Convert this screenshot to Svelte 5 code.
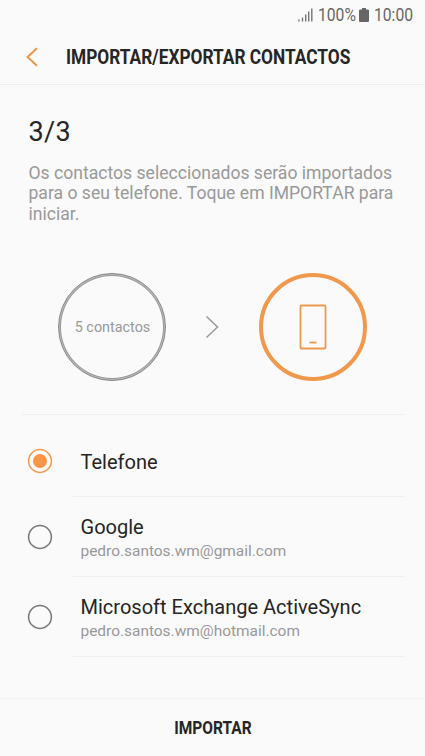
<script>
  let selected = $state('Telefone');
  const destinations = [
    { name: 'Telefone' },
    { name: 'Google', email: 'pedro.santos.wm@gmail.com' },
    { name: 'Microsoft Exchange ActiveSync', email: 'pedro.santos.wm@hotmail.com' }
  ];
</script>

<div class="screen">
  <div class="status">
    <svg class="signal" width="15" height="14" viewBox="0 0 15 14">
      <path d="M1 13.500v-2M4.500 13.500V9.500M7.700 13.500V6.500M10.700 13.500V3.500M13.800 13.500V0.500" />
    </svg>
    <span class="percent">100%</span>
    <svg class="battery" width="10" height="14" viewBox="0 0 10 14">
      <path d="M3 0h4v1.500h2q1 0 1 1V13q0 1-1 1H1q-1 0-1-1V2.500q0-1 1-1h2z" />
    </svg>
    <span class="time">10:00</span>
  </div>

  <header>
    <svg width="12" height="20" viewBox="0 0 12 20"><path d="M11 1.200L1.500 10l9.500 8.800" /></svg>
    <h1>IMPORTAR/EXPORTAR CONTACTOS</h1>
  </header>

  <main>
    <section class="intro">
      <h2>3/3</h2>
      <p>Os contactos seleccionados serão importados<br />para o seu telefone. Toque em IMPORTAR para<br />iniciar.</p>
    </section>

    <section class="transfer">
      <div class="circle source"><span>5 contactos</span></div>
      <svg class="arrow" width="14" height="24" viewBox="0 0 14 24"><path d="M1.500 1.500L12.500 12 1.500 22.500" /></svg>
      <div class="circle target">
        <svg width="28" height="46" viewBox="0 0 28 46">
          <rect x="1.500" y="1.500" width="25" height="43" rx="1" />
          <path d="M10.500 38.500h7" />
        </svg>
      </div>
    </section>

    <div class="options" role="radiogroup">
      {#each destinations as item}
        <button class="option" class:single={!item.email} role="radio" aria-checked={selected === item.name} onclick={() => (selected = item.name)}>
          <svg class="radio" class:checked={selected === item.name} width="24" height="24" viewBox="0 0 24 24">
            <circle cx="12" cy="12" r="11.400" />
            {#if selected === item.name}<circle class="dot" cx="12" cy="12" r="7" />{/if}
          </svg>
          <span class="label">
            <span class="name">{item.name}</span>
            {#if item.email}<span class="email">{item.email}</span>{/if}
          </span>
        </button>
      {/each}
    </div>
  </main>

  <button class="import"><span>IMPORTAR</span></button>
</div>

<style>
  :global(body) { background: #fafafa; }
  .screen {
    width: 425px;
    height: 756px;
    display: flex;
    flex-direction: column;
    overflow: hidden;
    box-sizing: border-box;
    background: #fafafa;
    color: #252525;
    font-family: Roboto, "Liberation Sans", sans-serif;
  }
  button { border: 0; padding: 0; background: none; font: inherit; color: inherit; text-align: left; }
  h1, h2, p { margin: 0; font-weight: 400; }
  svg { display: block; flex: none; fill: none; overflow: visible; }
  .status {
    height: 30px;
    flex: none;
    box-sizing: border-box;
    display: flex;
    align-items: center;
    padding: 0 12px 1px 298px;
    color: #666;
    font-size: 18px;
    white-space: nowrap;
  }
  .status span { transform-origin: left; }
  .signal { stroke: #777; stroke-width: 1.400; margin-right: 5px; }
  .percent { width: 37px; transform: scaleX(.87); }
  .battery { fill: #666; margin: 0 5px 0 4px; }
  .time { width: 39px; transform: scaleX(.87); }
  header {
    height: 55px;
    flex: none;
    box-sizing: border-box;
    display: flex;
    align-items: center;
    border-bottom: 1px solid #ededed;
    padding-left: 26px;
  }
  header svg { stroke: #ee9345; stroke-width: 1.900; }
  h1 {
    margin-left: 28px;
    font-size: 20px;
    font-weight: 700;
    white-space: nowrap;
    transform: scaleX(.864);
    transform-origin: left;
  }
  main { flex: 1; }
  .intro { height: 188px; box-sizing: border-box; padding: 29px 0 0 28.500px; }
  h2 { font-size: 27px; line-height: 36px; letter-spacing: .3px; }
  p { margin-top: 12.500px; color: #999; font-size: 17.590px; line-height: 20.600px; white-space: nowrap; }
  .transfer {
    height: 141px;
    box-sizing: border-box;
    display: flex;
    align-items: center;
    padding: 0 0 33px 58px;
  }
  .circle { width: 108px; height: 108px; box-sizing: border-box; border-radius: 50%; display: grid; place-items: center; }
  .source { border: 1px solid #858585; box-shadow: inset 0 0 0 1px #bdbdbd, inset 0 0 0 2px #999; color: #999; font-size: 14.400px; }
  .source span { padding: 1px 0 0 1px; }
  .arrow { margin: 0 40px 0 39px; stroke: #999; stroke-width: 1.500; }
  .target { border: 4px solid #f0984c; }
  .target svg { stroke: #ed984f; stroke-width: 1.800; }
  .options { margin-left: 22px; width: 383px; border-top: 1px solid #eee; }
  .option { display: flex; align-items: center; width: 100%; height: 80px; padding-left: 6px; box-sizing: border-box; }
  .option.single { height: 82px; }
  .option.single .radio { margin-top: 10px; }
  .option.single .label { padding-top: 11px; }
  .radio { stroke: #777; stroke-width: 1.500; }
  .radio.checked { stroke: #f5984a; }
  .dot { fill: #fa9545; stroke: none; }
  .label { height: 100%; flex: 1; margin-left: 21px; padding: 2px 0 0 7.500px; box-sizing: border-box; border-bottom: 1px solid #eee; display: flex; flex-direction: column; justify-content: center; white-space: nowrap; }
  .name { font-size: 20.050px; line-height: 26px; padding-top: 1px; }
  .email { color: #999; font-size: 15.440px; line-height: 22px; }
  .import { height: 58px; flex: none; border-top: 1px solid #f2f2f2; text-align: center; font-size: 18px; font-weight: 700; }
  .import span { display: inline-block; transform: scaleX(.86); }
</style>
